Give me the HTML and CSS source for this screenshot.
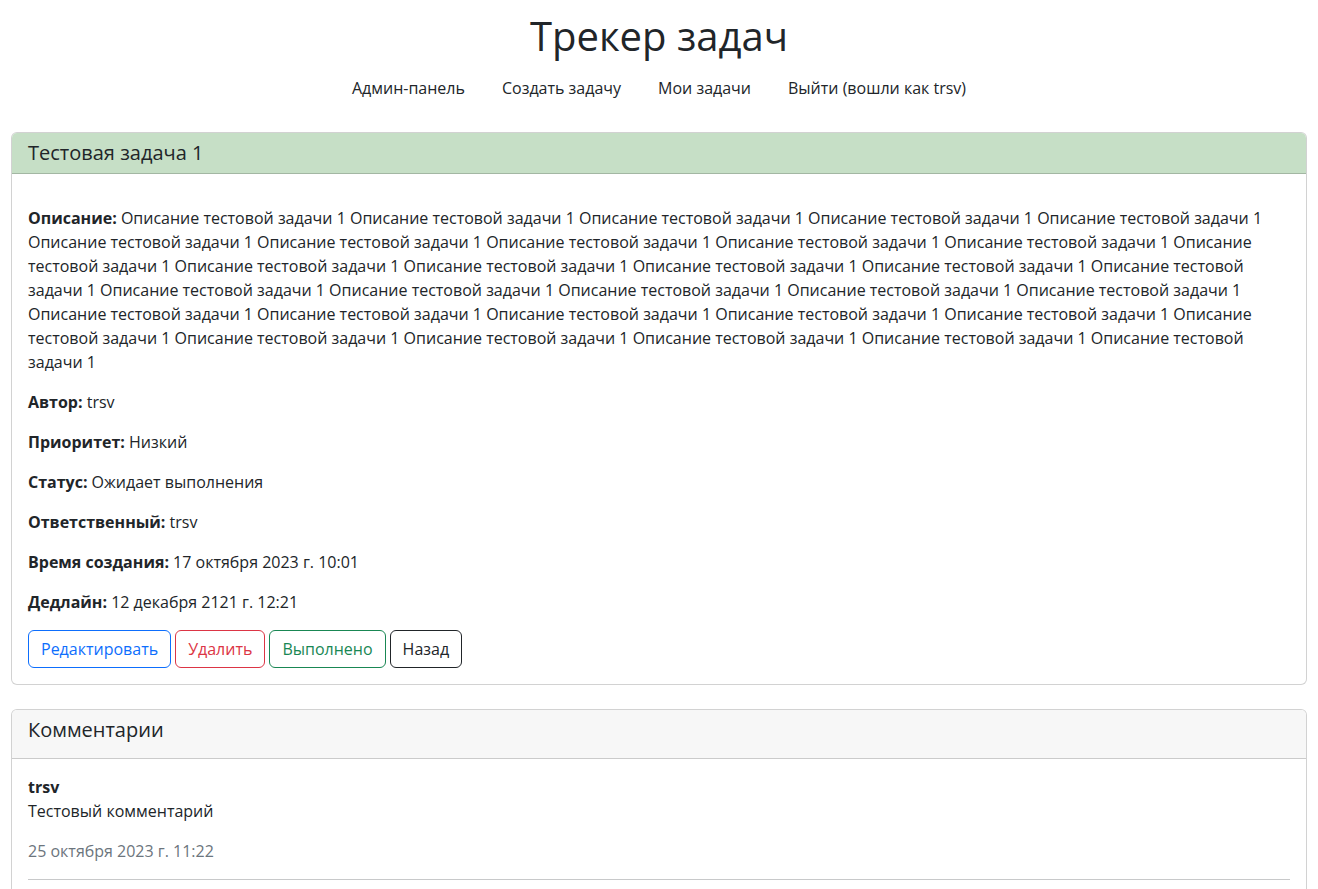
FILE: index.html
```html
<!DOCTYPE html>
<html lang="ru">
<head>
<meta charset="utf-8">
<title>Трекер задач</title>
<link rel="stylesheet" href="styles.css">
</head>
<body>
<div class="container">
  <header class="site-header">
    <h1 class="site-title">Трекер задач</h1>
    <nav class="nav">
      <a class="nav-link" href="#">Админ-панель</a>
      <a class="nav-link" href="#">Создать задачу</a>
      <a class="nav-link" href="#">Мои задачи</a>
      <a class="nav-link" href="#">Выйти (вошли как trsv)</a>
    </nav>
  </header>

  <section class="card">
    <div class="card-header header-green">
      <h5 class="card-title">Тестовая задача 1</h5>
    </div>
    <div class="card-body task-body">
      <p><strong>Описание:</strong> Описание тестовой задачи 1 Описание тестовой задачи 1 Описание тестовой задачи 1 Описание тестовой задачи 1 Описание тестовой задачи 1 Описание тестовой задачи 1 Описание тестовой задачи 1 Описание тестовой задачи 1 Описание тестовой задачи 1 Описание тестовой задачи 1 Описание тестовой задачи 1 Описание тестовой задачи 1 Описание тестовой задачи 1 Описание тестовой задачи 1 Описание тестовой задачи 1 Описание тестовой задачи 1 Описание тестовой задачи 1 Описание тестовой задачи 1 Описание тестовой задачи 1 Описание тестовой задачи 1 Описание тестовой задачи 1 Описание тестовой задачи 1 Описание тестовой задачи 1 Описание тестовой задачи 1 Описание тестовой задачи 1 Описание тестовой задачи 1 Описание тестовой задачи 1 Описание тестовой задачи 1 Описание тестовой задачи 1 Описание тестовой задачи 1 Описание тестовой задачи 1 Описание тестовой задачи 1</p>
      <p><strong>Автор:</strong> trsv</p>
      <p><strong>Приоритет:</strong> Низкий</p>
      <p><strong>Статус:</strong> Ожидает выполнения</p>
      <p><strong>Ответственный:</strong> trsv</p>
      <p><strong>Время создания:</strong> 17 октября 2023 г. 10:01</p>
      <p><strong>Дедлайн:</strong> 12 декабря 2121 г. 12:21</p>
      <div class="actions">
        <a class="btn btn-primary" href="#">Редактировать</a>
        <a class="btn btn-danger" href="#">Удалить</a>
        <a class="btn btn-success" href="#">Выполнено</a>
        <a class="btn btn-dark" href="#">Назад</a>
      </div>
    </div>
  </section>

  <section class="card comments">
    <div class="card-header header-light">
      <h5 class="card-title spaced">Комментарии</h5>
    </div>
    <div class="card-body">
      <div class="comment">
        <strong class="comment-author">trsv</strong>
        <p>Тестовый комментарий</p>
        <p class="muted">25 октября 2023 г. 11:22</p>
        <hr class="divider">
      </div>
    </div>
  </section>
</div>
</body>
</html>
```

FILE: styles.css
```css
* {
  box-sizing: border-box;
}

html, body {
  margin: 0;
  padding: 0;
  background: #fff;
}

body {
  font-family: "Open Sans", "Noto Sans", "DejaVu Sans", sans-serif;
  font-size: 16px;
  line-height: 24px;
  color: #212529;
}

.container {
  padding: 0 11px;
}

.site-header {
  display: flex;
  flex-direction: column;
  align-items: center;
}

.site-title {
  margin: 12px 0 8px;
  font-size: 40px;
  line-height: 48px;
  font-weight: 400;
}

.nav {
  display: flex;
  justify-content: center;
}

.nav-link {
  display: block;
  padding: 8px 18.5px;
  color: #212529;
  text-decoration: none;
}

.card {
  margin-top: 24px;
  border: 1px solid rgba(0, 0, 0, 0.175);
  border-radius: 6px;
  background: #fff;
  overflow: hidden;
}

.card-header {
  padding: 8px 16px;
  border-bottom: 1px solid rgba(0, 0, 0, 0.175);
}

.header-green {
  background: #c6dfc6;
}

.header-light {
  background: #f7f7f7;
}

.card-title {
  margin: 0;
  font-size: 20px;
  line-height: 24px;
  font-weight: 400;
}

.card-title.spaced {
  margin-bottom: 8px;
}

.card-body {
  padding: 16px;
}

.task-body {
  padding-top: 32px;
}

.card-body p {
  margin: 0 0 16px;
}

strong {
  font-weight: 700;
}

.actions {
  display: flex;
  gap: 4px;
}

.btn {
  display: inline-block;
  padding: 6px 12px;
  border: 1px solid currentColor;
  border-radius: 6px;
  font-size: 16px;
  line-height: 24px;
  text-decoration: none;
  background: transparent;
}

.btn-primary { color: #0d6efd; }
.btn-danger { color: #dc3545; }
.btn-success { color: #198754; }
.btn-dark { color: #212529; }

.comment-author {
  display: block;
}

.comment p {
  margin: 0 0 16px;
}

.muted {
  color: #6c757d;
}

.divider {
  margin: 0;
  border: 0;
  border-top: 1px solid #c8c9ca;
}
```
